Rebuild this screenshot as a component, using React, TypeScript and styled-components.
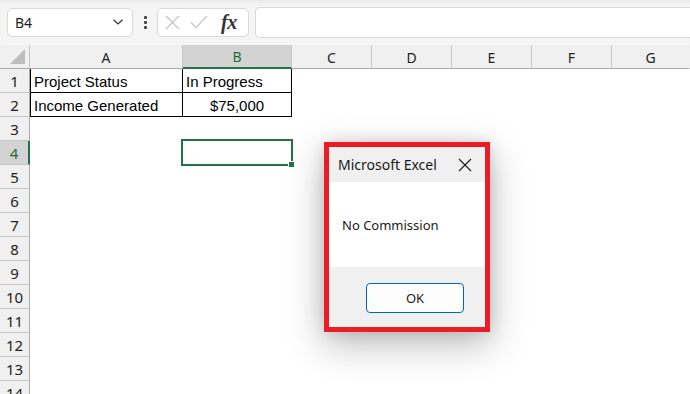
import React from 'react';
import styled, { createGlobalStyle } from 'styled-components';

const COLUMNS = ['A', 'B', 'C', 'D', 'E', 'F', 'G'];
const ROW_COUNT = 14;
const SELECTED = { col: 'B', row: 4 };

const cellData: Record<string, { text: string; align?: 'left' | 'center' }> = {
  A1: { text: 'Project Status' },
  B1: { text: 'In Progress' },
  A2: { text: 'Income Generated' },
  B2: { text: '$75,000', align: 'center' },
};

const GlobalStyle = createGlobalStyle`
  html, body {
    margin: 0;
    padding: 0;
    background: #ffffff;
    overflow: hidden;
  }
  body {
    font-family: "Noto Sans", "Open Sans", sans-serif;
  }
`;

const Screen = styled.div`
  position: relative;
  width: 690px;
  height: 394px;
  overflow: hidden;
  background: #ffffff;
`;

const Toolbar = styled.div`
  display: flex;
  align-items: center;
  height: 45px;
  box-sizing: border-box;
  padding: 0 0 1px 7px;
  background: #f5f5f5;
  box-shadow: inset 0 5px 4px -3px #e6e6e6;
`;

const NameBox = styled.div`
  display: flex;
  align-items: center;
  justify-content: space-between;
  width: 126px;
  height: 29px;
  box-sizing: border-box;
  padding: 0 8px 0 7px;
  background: #ffffff;
  border: 1px solid #d9d9d9;
  border-radius: 5px;
  font-family: "Noto Sans", sans-serif;
  font-size: 14px;
  color: #1f1f1f;
`;

const Dots = styled.div`
  display: flex;
  flex-direction: column;
  gap: 2px;
  margin: 0 10px 0 11px;

  span {
    width: 3px;
    height: 3px;
    background: #444;
    border-radius: 1px;
  }
`;

const FxBox = styled.div`
  display: flex;
  align-items: center;
  gap: 10px;
  width: 92px;
  height: 29px;
  box-sizing: border-box;
  padding: 0 5px 0 7px;
  background: #ffffff;
  border: 1px solid #d9d9d9;
  border-radius: 5px;
`;

const FxLabel = styled.span`
  margin-left: 3px;
  font-family: "Liberation Serif", "DejaVu Serif", serif;
  font-style: italic;
  font-weight: bold;
  font-size: 20px;
  color: #333;
  letter-spacing: -0.5px;
`;

const FormulaInput = styled.div`
  flex: 1;
  height: 29px;
  margin-left: 6px;
  background: #ffffff;
  border: 1px solid #d9d9d9;
  border-right: none;
  border-radius: 5px 0 0 5px;
`;

const Grid = styled.div`
  display: grid;
  grid-template-columns: 30px 153px 109px 80px 80px 80px 80px 1fr;
  grid-auto-rows: 24px;
`;

const Corner = styled.div`
  position: relative;
  box-sizing: border-box;
  background: #f0f0f0;
  border-right: 1px solid #c6c6c6;
  border-bottom: 1px solid #ababab;

  &::after {
    content: '';
    position: absolute;
    right: 4px;
    bottom: 4px;
    border-style: solid;
    border-width: 0 0 15px 15px;
    border-color: transparent transparent #bdbdbd transparent;
  }
`;

const ColHeader = styled.div<{ $active?: boolean; $last?: boolean }>`
  display: flex;
  align-items: center;
  justify-content: center;
  box-sizing: border-box;
  padding-top: 1px;
  background: ${({ $active }) => ($active ? '#d3d3d3' : '#f0f0f0')};
  color: ${({ $active }) => ($active ? '#1e6b3f' : '#222')};
  border-right: 1px solid ${({ $last }) => ($last ? 'transparent' : '#c6c6c6')};
  border-bottom: ${({ $active }) => ($active ? '2px solid #217346' : '1px solid #ababab')};
  font-family: "Noto Sans", sans-serif;
  font-size: 14px;
`;

const RowHeader = styled.div<{ $active?: boolean }>`
  display: flex;
  align-items: center;
  justify-content: center;
  box-sizing: border-box;
  background: ${({ $active }) => ($active ? '#d3d3d3' : '#f0f0f0')};
  color: ${({ $active }) => ($active ? '#1e6b3f' : '#222')};
  border-right: ${({ $active }) => ($active ? '2px solid #217346' : '1px solid #ababab')};
  border-bottom: 1px solid #c6c6c6;
  font-family: "Noto Sans", sans-serif;
  font-size: 15px;
`;

const Cell = styled.div<{
  $boxed?: boolean;
  $leftEdge?: boolean;
  $align?: 'left' | 'center';
  $selected?: boolean;
}>`
  position: relative;
  display: flex;
  align-items: center;
  justify-content: ${({ $align }) => ($align === 'center' ? 'center' : 'flex-start')};
  box-sizing: border-box;
  padding: 1px 3px 0 3px;
  white-space: nowrap;
  font-family: "Liberation Sans", Arial, sans-serif;
  font-size: 15px;
  color: #000;
  border-right: 1px solid ${({ $boxed }) => ($boxed ? '#000' : 'transparent')};
  border-bottom: 1px solid ${({ $boxed }) => ($boxed ? '#000' : 'transparent')};
  border-left: ${({ $leftEdge }) => ($leftEdge ? '1px solid #000' : 'none')};

  ${({ $selected }) =>
    $selected &&
    `
    &::before {
      content: '';
      position: absolute;
      inset: -2px -2px -2px -2px;
      border: 2px solid #217346;
    }
    &::after {
      content: '';
      position: absolute;
      right: -3px;
      bottom: -3px;
      width: 5px;
      height: 5px;
      background: #217346;
      border: 1px solid #fff;
      border-right: none;
      border-bottom: none;
    }
  `}
`;

const Dialog = styled.div`
  position: absolute;
  left: 324px;
  top: 142px;
  width: 166px;
  height: 190px;
  box-sizing: border-box;
  display: flex;
  flex-direction: column;
  border: 5px solid #ed1c24;
  background: #f0f0f0;
  box-shadow: 0 12px 36px rgba(0, 0, 0, 0.28), 0 0 14px rgba(0, 0, 0, 0.12);
  font-family: "Noto Sans", "Open Sans", sans-serif;
`;

const TitleBar = styled.div`
  display: flex;
  align-items: center;
  justify-content: space-between;
  height: 35px;
  padding: 0 13px 0 9px;
  background: #f0f0f0;
  font-size: 14px;
  color: #1a1a1a;
`;

const DialogBody = styled.div`
  display: flex;
  align-items: center;
  height: 85px;
  padding: 0 13px;
  background: #ffffff;
  font-size: 13px;
  color: #1a1a1a;
`;

const DialogFooter = styled.div`
  flex: 1;
  display: flex;
  justify-content: flex-end;
  padding: 16px 21px 0 0;
  background: #f0f0f0;
`;

const OkButton = styled.button`
  width: 98px;
  height: 30px;
  box-sizing: border-box;
  background: #fdfdfd;
  border: 1px solid #0067c0;
  border-radius: 4px;
  font-family: "Noto Sans", "Open Sans", sans-serif;
  font-size: 13px;
  color: #1a1a1a;
  padding: 0;
`;

const App: React.FC = () => {
  return (
    <Screen>
      <GlobalStyle />
      <Toolbar>
        <NameBox>
          <span>B4</span>
          <svg width="12" height="8" viewBox="0 0 12 8">
            <path d="M1.5 1.8 L6 6 L10.5 1.8" fill="none" stroke="#333" strokeWidth="1.2" />
          </svg>
        </NameBox>
        <Dots>
          <span />
          <span />
          <span />
        </Dots>
        <FxBox>
          <svg width="15" height="15" viewBox="0 0 15 15">
            <path d="M1 1 L14 14 M14 1 L1 14" stroke="#c4c4c4" strokeWidth="1.2" fill="none" />
          </svg>
          <svg width="18" height="14" viewBox="0 0 18 14">
            <path d="M1 7.5 L6 12.5 L17 1" stroke="#c4c4c4" strokeWidth="1.2" fill="none" />
          </svg>
          <FxLabel>fx</FxLabel>
        </FxBox>
        <FormulaInput />
      </Toolbar>

      <Grid>
        <Corner />
        {COLUMNS.map((c) => (
          <ColHeader key={c} $active={c === SELECTED.col} $last={c === 'G'}>
            {c}
          </ColHeader>
        ))}

        {Array.from({ length: ROW_COUNT }, (_, i) => i + 1).map((row) => (
          <React.Fragment key={row}>
            <RowHeader $active={row === SELECTED.row}>{row}</RowHeader>
            {COLUMNS.map((c) => {
              const key = `${c}${row}`;
              const data = cellData[key];
              const boxed = row <= 2 && (c === 'A' || c === 'B');
              return (
                <Cell
                  key={key}
                  $boxed={boxed}
                  $leftEdge={boxed && c === 'A'}
                  $align={data?.align}
                  $selected={c === SELECTED.col && row === SELECTED.row}
                >
                  {data?.text}
                </Cell>
              );
            })}
          </React.Fragment>
        ))}
      </Grid>

      <Dialog>
        <TitleBar>
          <span>Microsoft Excel</span>
          <svg width="14" height="14" viewBox="0 0 14 14">
            <path d="M1 1 L13 13 M13 1 L1 13" stroke="#1a1a1a" strokeWidth="1.1" fill="none" />
          </svg>
        </TitleBar>
        <DialogBody>No Commission</DialogBody>
        <DialogFooter>
          <OkButton>OK</OkButton>
        </DialogFooter>
      </Dialog>
    </Screen>
  );
};

export default App;
